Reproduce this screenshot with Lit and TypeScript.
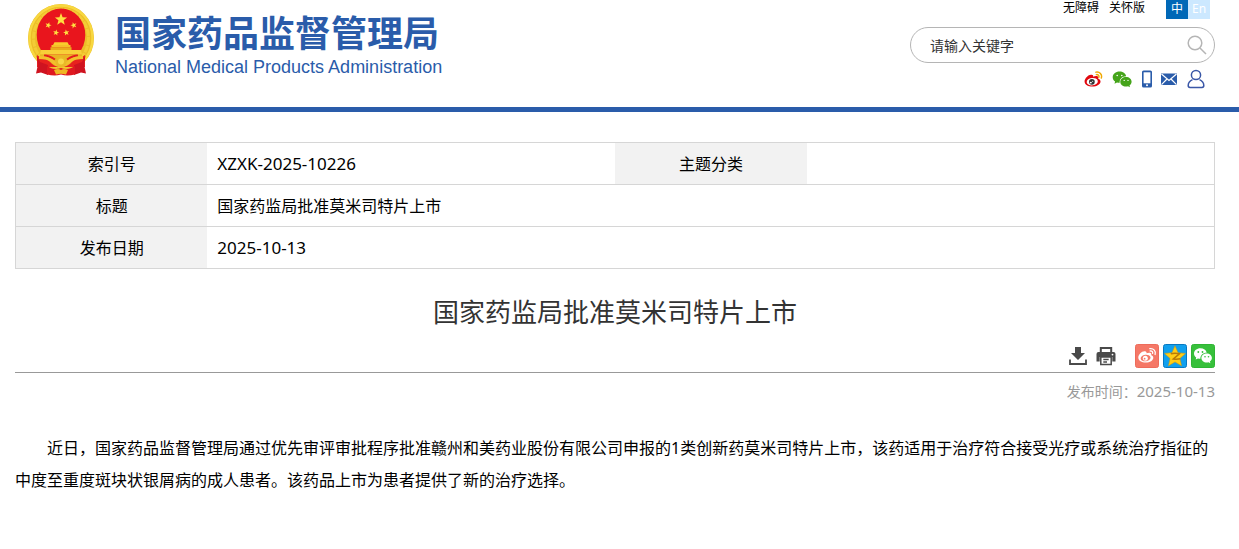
import { LitElement, html, css, svg } from "lit";
import { customElement } from "lit/decorators.js";

const star = (cx: number, cy: number, r: number, turn = 0) => {
  const pts: string[] = [];
  for (let i = 0; i < 10; i++) {
    const a = ((i * 36 + turn - 90) * Math.PI) / 180;
    const d = i % 2 ? r * 0.42 : r;
    pts.push(`${(cx + d * Math.cos(a)).toFixed(2)},${(cy + d * Math.sin(a)).toFixed(2)}`);
  }
  return svg`<polygon points=${pts.join(" ")} fill="#ffe040"></polygon>`;
};

const emblem = html`<svg class="emblem" viewBox="0 0 66 72" aria-hidden="true">
  <ellipse cx="33" cy="34" rx="33" ry="34" fill="#ecbd28"></ellipse>
  <ellipse cx="33" cy="34" rx="31.5" ry="32.5" fill="none" stroke="#f8d840" stroke-width="2.4"></ellipse>
  <ellipse cx="33" cy="34" rx="27.5" ry="29" fill="none" stroke="#f4cc36" stroke-width="3" stroke-dasharray="7 1"></ellipse>
  <ellipse cx="33" cy="31" rx="24.3" ry="26.5" fill="#e9151d"></ellipse>
  ${star(33, 15.5, 6.4)} ${star(20.3, 21.3, 3.3, 18)} ${star(45.7, 21.3, 3.3, -18)}
  ${star(28, 28.6, 3.2, 10)} ${star(38.3, 28.6, 3.2, -10)}
  <path d="M26.5 38.3h13l1.500 2.700h-16z" fill="#f9cc2c"></path>
  <path d="M23.5 41h19v2.200h-19z" fill="#f4c028"></path>
  <path d="M22.5 43.200h21v3.300h-21z" fill="#e9ac1c"></path>
  <path d="M13 46h40l1 4.500h-42z" fill="#f8cf38"></path>
  <path d="M12 50.5h42v12h-42z" fill="#eab424"></path>
  <path d="M16 51.500c5 0 8 2 11 4M50 51.500c-5 0-8 2-11 4" fill="none" stroke="#e4201c" stroke-width="2"></path>
  <path d="M9 51c5 4 9 3 12 6s6 6 12 6 9-3 12-6 7-2 12-6v12H9z" fill="#e8211e"></path>
  <path d="M11 53.500c6 0 10 1 13 3.500s5 4.500 9 4.500 6-2 9-4.500 7-3.500 13-3.500" fill="none" stroke="#f3c02e" stroke-width="3"></path>
  <circle cx="33" cy="58" r="5.500" fill="#e9b828"></circle>
  <circle cx="33" cy="57.500" r="3" fill="#f8d747"></circle>
  <path d="M8.500 51.500l1.500 9-2 9 5-1 7 2.500V61l-8-3zM57.500 51.500l-1.500 9 2 9-5-1-7 2.500V61l8-3z" fill="#cf1320"></path>
  <path d="M19 62c5 3 9 4 14 2 5 2 9 1 14-2v8.500c-5 1-9 1.500-14 0-5 1.500-9 1-14 0z" fill="#df1820"></path>
  <path d="M26 66q4-2 7 0 3-2 7 0l-2 4.500q-5-1.500-10 0z" fill="#efb724"></path>
</svg>`;

const weibo = html`<svg class="i19" viewBox="0 0 20 18" aria-hidden="true">
  <path d="M8 4.500C5 3.800 1 8 .600 11c-.400 4 4.200 6 8.200 6 4.800 0 8.600-2.600 8.600-5.400 0-1.800-1.200-2.500-2.500-2.900.500-1.600 0-2.700-1.400-2.900-1.300-.200-2.700.200-3.900.700C10 5.300 9.400 4.700 8 4.500z" fill="#e1080f"></path>
  <ellipse cx="8.700" cy="11.800" rx="5.900" ry="3.900" fill="#fff" transform="rotate(-8 8.700 11.800)"></ellipse>
  <circle cx="8.300" cy="12" r="3" fill="#333"></circle>
  <circle cx="7.200" cy="12.800" r="1" fill="#fff"></circle><circle cx="9.100" cy="11.400" r=".600" fill="#fff"></circle>
  <path d="M12.500 1.800c3.900-.900 7 2.400 5.700 6.200M13 4.400c1.900-.300 3.200 1 2.600 2.900" fill="none" stroke="#f0a800" stroke-width="1.500" stroke-linecap="round"></path>
</svg>`;

const wechat = html`<svg class="i20" viewBox="0 0 20 18" aria-hidden="true">
  <path d="M7.500 1.500C3.600 1.500.700 4 .700 7.200c0 1.800.900 3.300 2.400 4.400L2.500 13.700 5 12.500c.900.200 1.700.300 2.700.300C7.300 9 10.200 6.200 14.200 6.200 13.600 3.400 10.900 1.500 7.500 1.500z" fill="#45a41a"></path>
  <path d="M14 7c-3.200 0-5.700 2.100-5.700 4.800S10.800 16.600 14 16.600c.700 0 1.400-.100 2-.300l2 1-.500-1.800c1.300-.900 2.100-2.200 2.100-3.700C19.600 9.100 17.200 7 14 7z" fill="#45a41a"></path>
  <g fill="#fff"><circle cx="5.200" cy="5.500" r=".800"></circle><circle cx="9.800" cy="5.500" r=".800"></circle><circle cx="12.200" cy="10.400" r=".700"></circle><circle cx="16" cy="10.400" r=".700"></circle></g>
</svg>`;

const phone = html`<svg class="phone" viewBox="0 0 10 18" aria-hidden="true">
  <rect width="10" height="17" rx="1.600" y=".500" fill="#2a5caa"></rect><rect x="1.600" y="2.300" width="6.800" height="11" fill="#fff"></rect>
  <circle cx="5" cy="15.300" r="1" fill="#fff"></circle></svg>`;

const mail = html`<svg class="mail" viewBox="0 0 16 18" aria-hidden="true">
  <rect y="3.500" width="16" height="11.500" fill="#2a5caa"></rect>
  <path d="M.500 4l7.500 6.500L15.500 4M.500 14.700L6 9M15.500 14.700L10 9" fill="none" stroke="#fff" stroke-width="1.200"></path></svg>`;

const user = html`<svg class="user" viewBox="0 0 18 20" aria-hidden="true">
  <g fill="none" stroke="#3a57a7" stroke-width="1.500"><circle cx="9" cy="6" r="4.600"></circle>
  <path d="M5.500 10.600C2.800 11.800 1.200 14 1.200 16.500c0 1.400.600 1.900 1.800 1.900h12c1.200 0 1.800-.500 1.800-1.900 0-2.500-1.600-4.700-4.300-5.900"></path></g></svg>`;

const download = html`<svg class="tool" viewBox="0 0 20 20" aria-hidden="true">
  <path d="M7 1h6v6h4l-7 7-7-7h4z" fill="#4a4a4a"></path>
  <path d="M2 13.500V18h16v-4.500" fill="none" stroke="#4a4a4a" stroke-width="1.800"></path></svg>`;

const printer = html`<svg class="tool" viewBox="0 0 20 20" aria-hidden="true">
  <path d="M3.800 1h12.400v5h-2V3H5.800v3h-2z" fill="#4a4a4a"></path>
  <path d="M2.500 6h15q2 0 2 2v7.500h-3.200V11H3.700v4.500H.500V8q0-2 2-2z" fill="#4a4a4a"></path>
  <circle cx="16.500" cy="8.600" r=".900" fill="#fff"></circle>
  <path d="M4.800 11h10.400v7.500H4.800zM7.300 13.500h5.400M7.300 15.900h3.700" fill="none" stroke="#4a4a4a" stroke-width="1.500"></path></svg>`;

const shareWeibo = html`<svg class="share" viewBox="0 0 24 24" aria-hidden="true">
  <rect x=".500" y=".500" width="23" height="23" rx="2" fill="#f57867" stroke="#ee6c5b"></rect>
  <path d="M10 7.200C7 6.600 3.500 10.300 3.300 13.300c-.200 3.400 3.600 5.300 7.400 5.300 4.300 0 7.600-2.300 7.600-4.900 0-1.500-1-2.200-2.100-2.500.400-1.400 0-2.300-1.300-2.500-1.100-.200-2.300.200-3.300.600 0-1.100-.300-1.900-1.600-2.100z" fill="#fff"></path>
  <ellipse cx="10.600" cy="14" rx="5" ry="3.300" fill="#f57867" transform="rotate(-8 10.600 14)"></ellipse>
  <circle cx="10.300" cy="14.200" r="2.500" fill="#fff"></circle><circle cx="9.600" cy="14.700" r=".900" fill="#f57867"></circle>
  <path d="M14.800 4.700c3.800-.600 6.400 2.300 5.300 5.800M15.200 7c1.700-.300 2.800.800 2.400 2.400" fill="none" stroke="#fff" stroke-width="1.300" stroke-linecap="round"></path></svg>`;

const shareQzone = html`<svg class="share" viewBox="0 0 24 24" aria-hidden="true">
  <rect x=".500" y=".500" width="23" height="23" rx="2" fill="#11a0ee" stroke="#0878c0"></rect>
  <path d="M12 1.800l3 6.900 7.500.700-5.600 5 1.600 7.400-6.500-3.900-6.500 3.900 1.600-7.400-5.600-5 7.500-.700z" fill="#ffcd16" stroke="#d89400" stroke-width=".500"></path>
  <path d="M7.800 9.800c3-.800 5.500-.800 8.600 0L10.300 15c2.200.300 4.500.300 7-.200" fill="none" stroke="#b87906" stroke-width="1.500"></path></svg>`;

const shareWechat = html`<svg class="share" viewBox="0 0 24 24" aria-hidden="true">
  <rect x=".500" y=".500" width="23" height="23" rx="2" fill="#37c03b" stroke="#2fb534"></rect>
  <path d="M9.400 4.300C5.800 4.300 3 6.600 3 9.600c0 1.700.800 3 2.200 4l-.500 1.900L7 14.400c.800.200 1.500.300 2.400.300-.200-3.400 2.500-6.100 6.300-6C15.200 6.100 12.600 4.300 9.400 4.300z" fill="#fff"></path>
  <path d="M15.700 9.600c-3 0-5.300 2-5.300 4.500s2.300 4.500 5.300 4.500c.600 0 1.300-.100 1.800-.300l1.900 1-.500-1.700c1.200-.800 2-2.100 2-3.500 0-2.500-2.200-4.500-5.200-4.500z" fill="#fff"></path>
  <g fill="#37c03b"><circle cx="7.300" cy="8" r=".900"></circle><circle cx="11.500" cy="8" r=".900"></circle><circle cx="14" cy="12.800" r=".800"></circle><circle cx="17.500" cy="12.800" r=".800"></circle></g></svg>`;

@customElement("app-root")
export class AppRoot extends LitElement {
  static styles = css`
    :host {
      display: block;
      background: #fff;
      color: #000;
      font: 16px/32px "Noto Sans", "Noto Sans CJK SC", sans-serif;
    }
    * { box-sizing: border-box; }
    a { color: inherit; text-decoration: none; }
    svg { display: block; }
    button { border: 0; padding: 0; background: none; cursor: pointer; }
    .header {
      display: flex;
      justify-content: space-between;
      align-items: flex-start;
      padding: 0 24px 18px 28px;
      border-bottom: 5px solid #2a5caa;
    }
    .brand { display: flex; gap: 21px; padding-top: 4px; color: #2a5caa; }
    .emblem { width: 66px; height: 72px; }
    .names { display: flex; flex-direction: column; padding-top: 3px; }
    .name { font: 700 36px/48px "Noto Sans CJK SC", sans-serif; }
    .name-en { font: 18px/24px "Liberation Sans", sans-serif; }
    .side { display: flex; flex-direction: column; align-items: flex-end; width: 305px; }
    .links { display: flex; gap: 10px; padding-right: 5px; font-size: 12px; line-height: 15px; }
    .lang { display: flex; margin-left: 11px; color: #fff; text-align: center; line-height: 17px; }
    .lang a { width: 22px; height: 19px; background: #cce8ff; }
    .lang .on { background: #0068b7; }
    .search {
      display: flex;
      align-items: center;
      align-self: stretch;
      height: 36px;
      margin-top: 8px;
      padding: 0 7px 0 19px;
      border: 1px solid #b5b5b5;
      border-radius: 18px;
    }
    .search input {
      flex: 1;
      min-width: 0;
      border: 0;
      padding: 0;
      outline: 0;
      background: none;
      font: 14px/20px "Noto Sans CJK SC", sans-serif;
      color: #333;
    }
    .search input::placeholder { color: #333; opacity: 1; }
    .glass { width: 20px; height: 20px; }
    .social { display: flex; align-items: center; gap: 9px; height: 20px; margin-top: 6px; padding-right: 10px; }
    .social .wide { margin-left: 1px; }
    .i19 { width: 19px; height: 18px; }
    .i20 { width: 20px; height: 18px; }
    .phone { width: 10px; height: 18px; }
    .mail { width: 16px; height: 18px; }
    .user { width: 18px; height: 20px; }
    .main { padding: 30px 24px 48px 15px; }
    table { width: 100%; border-collapse: collapse; table-layout: fixed; border: 1px solid #d6d6d6; }
    tr { border-bottom: 1px solid #d6d6d6; }
    th, td { height: 42px; padding: 0 10px; line-height: 24px; }
    th { background: #f2f2f2; font-weight: 400; text-align: center; }
    td { text-align: left; }
    .label { width: 16%; }
    .value { width: 34%; }
    .num { font-size: 17px; }
    h1 { margin: 23px 0 14px; font: 400 26px/38px "Noto Sans CJK SC", sans-serif; color: #333; text-align: center; }
    .tools { display: flex; justify-content: flex-end; align-items: center; gap: 4px; padding-bottom: 4px; border-bottom: 1px solid #999; }
    .pair { display: flex; gap: 8px; margin-right: 15px; }
    .tool { width: 20px; height: 20px; }
    .share { width: 24px; height: 24px; }
    .date { margin: 7px 0 0; font-size: 14px; line-height: 22px; color: #999; text-align: right; }
    .date .num { font-size: 15px; }
    .text { margin: 29px 0 0; text-indent: 2em; }
  `;

  render() {
    return html`
      <header class="header" lang="zh-CN">
        <div class="brand">
          ${emblem}
          <div class="names">
            <span class="name">国家药品监督管理局</span>
            <span class="name-en">National Medical Products Administration</span>
          </div>
        </div>
        <div class="side">
          <nav class="links">
            <a href="#">无障碍</a><a href="#">关怀版</a>
            <span class="lang"><a class="on" href="#">中</a><a href="#">En</a></span>
          </nav>
          <form class="search" role="search" @submit=${(e: Event) => e.preventDefault()}>
            <input type="text" placeholder="请输入关键字" aria-label="请输入关键字" />
            <button type="submit" aria-label="搜索">
              <svg class="glass" viewBox="0 0 20 20" fill="none" stroke="#b5b5b5" stroke-width="1.500"><circle cx="8" cy="8" r="6.800"></circle><path d="M13 13l6 6"></path></svg>
            </button>
          </form>
          <nav class="social">
            <a href="#" aria-label="微博">${weibo}</a>
            <a href="#" aria-label="微信">${wechat}</a>
            <a class="wide" href="#" aria-label="手机">${phone}</a>
            <a href="#" aria-label="邮箱">${mail}</a>
            <a class="wide" href="#" aria-label="用户">${user}</a>
          </nav>
        </div>
      </header>
      <main class="main" lang="zh-CN">
        <table>
          <colgroup><col class="label" /><col class="value" /><col class="label" /><col class="value" /></colgroup>
          <tbody>
            <tr><th scope="row">索引号</th><td class="num">XZXK-2025-10226</td><th scope="row">主题分类</th><td></td></tr>
            <tr><th scope="row">标题</th><td colspan="3">国家药监局批准莫米司特片上市</td></tr>
            <tr><th scope="row">发布日期</th><td class="num" colspan="3">2025-10-13</td></tr>
          </tbody>
        </table>
        <h1>国家药监局批准莫米司特片上市</h1>
        <div class="tools">
          <div class="pair">
            <button aria-label="下载">${download}</button>
            <button aria-label="打印">${printer}</button>
          </div>
          <a href="#" aria-label="分享到微博">${shareWeibo}</a>
          <a href="#" aria-label="分享到QQ空间">${shareQzone}</a>
          <a href="#" aria-label="分享到微信">${shareWechat}</a>
        </div>
        <p class="date">发布时间：<span class="num">2025-10-13</span></p>
        <p class="text">近日，国家药品监督管理局通过优先审评审批程序批准赣州和美药业股份有限公司申报的1类创新药莫米司特片上市，该药适用于治疗符合接受光疗或系统治疗指征的中度至重度斑块状银屑病的成人患者。该药品上市为患者提供了新的治疗选择。</p>
      </main>
    `;
  }
}
